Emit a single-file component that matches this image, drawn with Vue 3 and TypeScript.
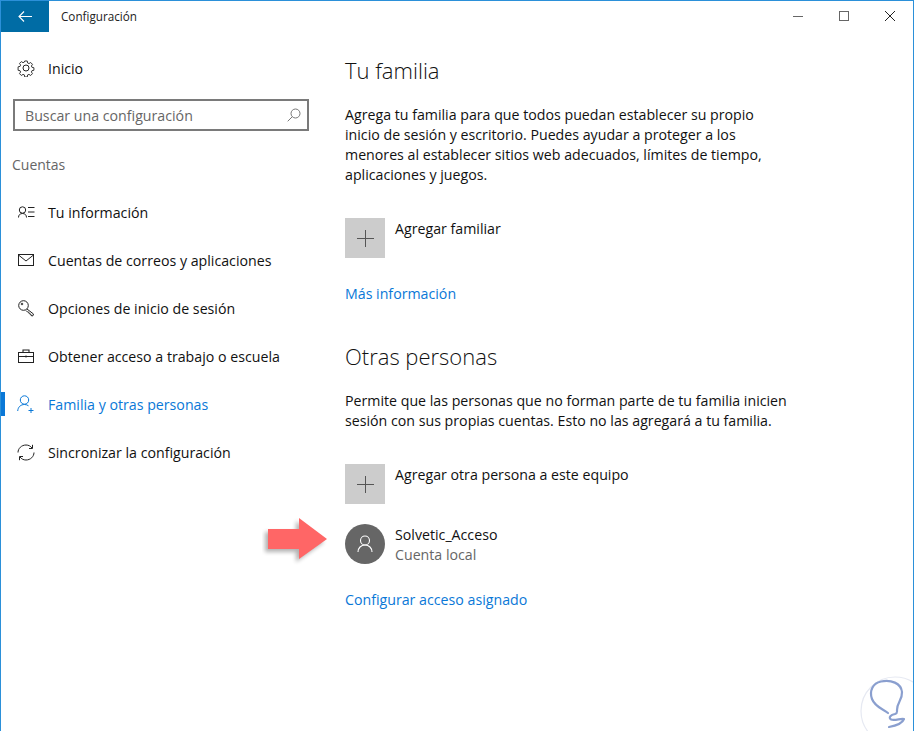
<script setup lang="ts">
interface NavItem { label: string; icon: string; active?: boolean }
const nav: NavItem[] = [
  { label: 'Tu información', icon: 'info' },
  { label: 'Cuentas de correos y aplicaciones', icon: 'mail' },
  { label: 'Opciones de inicio de sesión', icon: 'key' },
  { label: 'Obtener acceso a trabajo o escuela', icon: 'work' },
  { label: 'Familia y otras personas', icon: 'family', active: true },
  { label: 'Sincronizar la configuración', icon: 'sync' },
]
</script>

<template>
  <div class="window">
    <header class="titlebar">
      <div class="back">
        <svg width="14" height="11" viewBox="0 0 14 11" fill="none" stroke="#fff" stroke-width="1.100"><path d="M1 5.500h13M6 .5l-5 5 5 5" /></svg>
      </div>
      <div class="title">Configuración</div>
      <div class="controls">
        <svg class="ctl" width="46" height="31" viewBox="0 0 46 31" fill="none" stroke="#666"><path d="M18 15.500h10" /></svg>
        <svg class="ctl" width="46" height="31" viewBox="0 0 46 31" fill="none" stroke="#666"><rect x="18.500" y="10.500" width="9" height="9" /></svg>
        <svg class="ctl" width="46" height="31" viewBox="0 0 46 31" fill="none" stroke="#222"><path d="M18 10l10 10M28 10 18 20" /></svg>
      </div>
    </header>

    <div class="body">
      <aside class="sidebar">
        <div class="home">
          <svg class="ico" width="18" height="18" viewBox="0 0 18 18" fill="none" stroke="#222" stroke-width="1">
            <circle cx="9" cy="9" r="3" />
            <path d="M7.600 1.200h2.800l.4 2.200 1.500.7 1.900-1.200 2 2-1.200 1.900.6 1.400 2.200.5v2.800l-2.200.5-.6 1.400 1.200 1.900-2 2-1.900-1.200-1.500.6-.4 2.300H7.600l-.4-2.300-1.500-.6-1.900 1.200-2-2 1.200-1.900-.6-1.400-2.200-.5V7.700l2.200-.5.6-1.400-1.200-1.900 2-2 1.900 1.200 1.500-.7z" transform="translate(.9 .9) scale(.9)" />
          </svg>
          <span>Inicio</span>
        </div>
        <div class="search">
          <span>Buscar una configuración</span>
          <svg width="14" height="14" viewBox="0 0 14 14" fill="none" stroke="#777"><circle cx="8.500" cy="5.500" r="4.500" /><path d="M5.300 8.700.7 13.300" /></svg>
        </div>
        <div class="group">Cuentas</div>
        <nav>
          <div v-for="item in nav" :key="item.label" class="nav-item" :class="{ active: item.active }">
            <span class="ico-box">
              <svg v-if="item.icon === 'info'" width="17" height="12" viewBox="0 0 17 12" fill="none" stroke="#222"><circle cx="4.500" cy="4" r="3.200" /><path d="M.5 11.500c0-2.500 1.500-4 4-4s4 1.500 4 4M10 1.500h6.500M10 6h6.500M10 10.500h6.500" /></svg>
              <svg v-else-if="item.icon === 'mail'" width="16" height="12" viewBox="0 0 16 12" fill="none" stroke="#222"><rect x=".5" y=".5" width="15" height="11" /><path d="m.5 1 7.500 6 7.500-6" /></svg>
              <svg v-else-if="item.icon === 'key'" width="17" height="17" viewBox="0 0 17 17" fill="none" stroke="#222"><circle cx="5.500" cy="5.500" r="4.800" /><circle cx="4" cy="4" r=".8" /><path d="M9 9l6.500 5-.8 2-1.700-.5-.3-1.500-1.500-.3-.3-1.400-1.400-.3-1.500-1.500" /></svg>
              <svg v-else-if="item.icon === 'work'" width="16" height="14" viewBox="0 0 16 14" fill="none" stroke="#222"><rect x=".5" y="3.500" width="15" height="10" /><path d="M5 3.500V1h6v2.500M.5 7.500h15M8 6.500v2" stroke-width="1.100" /></svg>
              <svg v-else-if="item.icon === 'family'" width="18" height="18" viewBox="0 0 18 18" fill="none" stroke="#0a78d7"><circle cx="7.500" cy="5" r="4.200" /><path d="M.7 16c.3-4 3-6.500 6.800-6.500 1.500 0 3 .5 4 1.300M11.500 15.500h5M14 13v5" /></svg>
              <svg v-else width="18" height="17" viewBox="0 0 18 17" fill="none" stroke="#222"><path d="M1 8.500C1 4.500 4.500 1 9 1c2.500 0 4.500 1 6 3M17 8.500c0 4-3.500 7.500-8 7.500-2.500 0-4.500-1-6-3M15.500.8V4.500H12M2.500 16.200V12.500H6" /></svg>
            </span>
            <span>{{ item.label }}</span>
          </div>
        </nav>
      </aside>

      <main class="content">
        <h2 class="first">Tu familia</h2>
        <p>Agrega tu familia para que todos puedan establecer su propio<br />inicio de sesión y escritorio. Puedes ayudar a proteger a los<br />menores al establecer sitios web adecuados, límites de tiempo,<br />aplicaciones y juegos.</p>
        <div class="row add-one">
          <div class="tile"><svg width="17" height="17" viewBox="0 0 17 17" stroke="#555"><path d="M8.500 0v17M0 8.500h17" /></svg></div>
          <div class="label">Agregar familiar</div>
        </div>
        <a class="link link-one">Más información</a>

        <h2 class="second">Otras personas</h2>
        <p>Permite que las personas que no forman parte de tu familia inicien<br />sesión con sus propias cuentas. Esto no las agregará a tu familia.</p>
        <div class="row add-two">
          <div class="tile"><svg width="17" height="17" viewBox="0 0 17 17" stroke="#555"><path d="M8.500 0v17M0 8.500h17" /></svg></div>
          <div class="label">Agregar otra persona a este equipo</div>
        </div>
        <div class="row person">
          <div class="avatar">
            <svg width="16" height="18" viewBox="0 0 16 18" fill="none" stroke="#fff" stroke-width="1.100"><circle cx="8" cy="5.500" r="4.500" /><path d="M1 17c0-4 3-7 7-7s7 3 7 7" /></svg>
          </div>
          <div class="label">Solvetic_Acceso<div class="sub">Cuenta local</div></div>
        </div>
        <a class="link link-two">Configurar acceso asignado</a>
      </main>
    </div>

    <svg class="arrow" width="72" height="52" viewBox="0 0 72 52">
      <defs><filter id="sh" x="-30%" y="-30%" width="160%" height="160%"><feGaussianBlur stdDeviation="2.200" /></filter></defs>
      <path d="M6 12h31V1l28 21-28 20V32H6z" fill="#000" opacity=".3" filter="url(#sh)" transform="translate(-3 3)" />
      <path d="M6 12h31V1l28 21-28 20V32H6z" fill="#ff6666" />
    </svg>

    <svg class="mark" width="78" height="81" viewBox="0 0 78 81" fill="none">
      <circle cx="60" cy="61" r="34" fill="#fff" stroke="#e6e9f2" stroke-width="1.200" />
      <path d="M53 63C48 59 40 57 37 49 34 41 38 33 46 31.500 56 29.500 66 33 67 42 67.500 50 62 52 62 60 62 63 62.500 63 60 64 56 65 53 67 56 69.500 60 71 66 68 69 69 67 74 60 76 54 77" stroke="#8a9fcf" stroke-width="2.200" stroke-linecap="round" stroke-linejoin="round" />
    </svg>
  </div>
</template>

<style>
html, body { margin: 0; background: #fff; overflow: hidden; }
</style>

<style scoped>
.window {
  position: relative;
  box-sizing: border-box;
  width: 914px;
  height: 731px;
  overflow: hidden;
  background: #fff;
  border: 1px solid #2b90d9;
  border-bottom: 0;
  font-family: "Open Sans", "Noto Sans", sans-serif;
  font-size: 14.200px;
  color: #111;
}
.titlebar { display: flex; align-items: center; height: 31px; }
.back {
  display: flex; align-items: center; justify-content: center;
  width: 48px; height: 31px; background: #006ca5;
}
.title { margin-left: 12px; margin-top: -2px; font-size: 11.700px; color: #222; }
.controls { display: flex; margin-left: auto; }
.ctl { display: block; }
.body { display: flex; }
.sidebar { width: 344px; flex: none; box-sizing: border-box; }
.home { display: flex; align-items: center; height: 48px; margin-top: 12px; padding-left: 16px; gap: 13px; }
.search {
  display: flex; align-items: center; justify-content: space-between;
  box-sizing: border-box;
  width: 296px; height: 32px; margin: 7px 0 0 12px; padding: 0 6px 0 10px;
  border: 2px solid #7a7a7a; color: #666;
}
.group { margin: 24px 0 0 11px; height: 20px; line-height: 20px; color: #666; font-size: 14px; }
nav { margin-top: 13px; }
.nav-item { position: relative; display: flex; align-items: center; height: 48px; padding-left: 47px; }
.ico-box { position: absolute; left: 16px; width: 18px; display: flex; align-items: center; justify-content: center; }
.ico { display: block; }
.active { color: #0a78d7; }
.active::before { content: ""; position: absolute; left: 0; top: 12px; width: 4px; height: 24px; background: #0a78d7; }
.content { flex: 1; min-width: 0; }
h2 { margin: 0; font-size: 22px; font-weight: 300; line-height: 30px; }
h2.first { margin-top: 23px; }
h2.second { margin-top: 37px; }
p { margin: 20px 0 0; line-height: 20px; white-space: nowrap; }
.row { display: flex; gap: 10px; }
.add-one { margin-top: 33px; }
.add-two { margin-top: 33px; }
.person { margin-top: 20px; }
.tile { display: flex; align-items: center; justify-content: center; width: 40px; height: 40px; background: #ccc; }
.label { line-height: 20px; padding-top: 1px; }
.sub { color: #666; }
.avatar { display: flex; align-items: center; justify-content: center; width: 40px; height: 40px; border-radius: 50%; background: #666; }
.link { display: block; color: #0a78d7; line-height: 20px; }
.link-one { margin-top: 26px; }
.link-two { margin-top: 25px; }
.arrow { position: absolute; left: 261px; top: 516px; }
.mark { position: absolute; right: 0; bottom: 0; }
</style>
